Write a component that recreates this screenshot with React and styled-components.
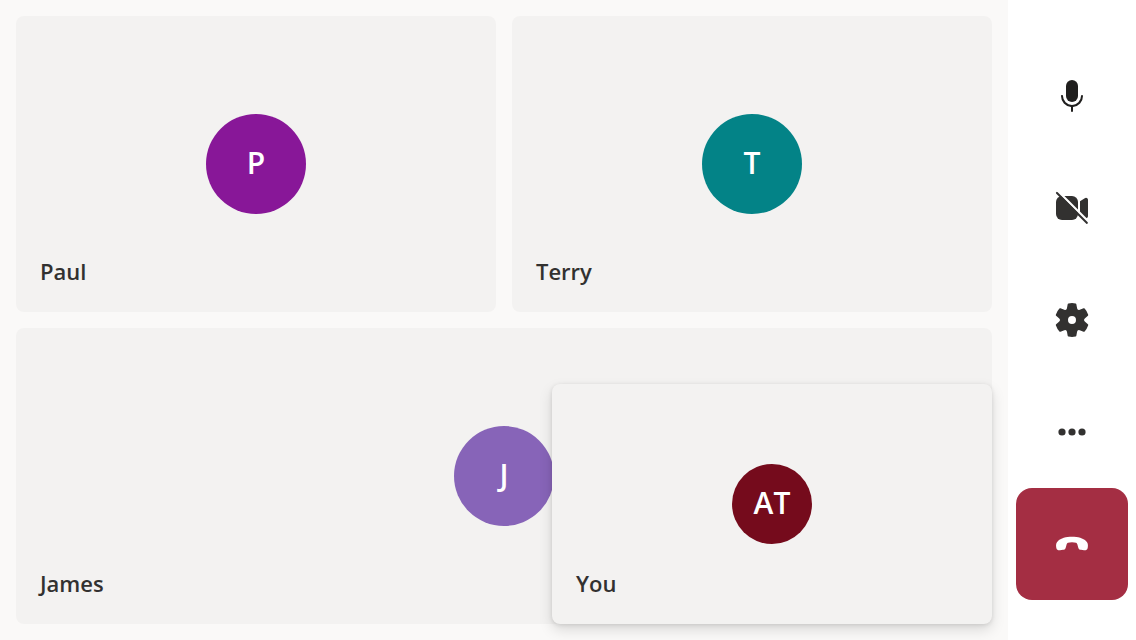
import React from "react";
import styled, { createGlobalStyle } from "styled-components";

const GlobalStyle = createGlobalStyle`
  *, *::before, *::after { box-sizing: border-box; }
  body {
    margin: 0;
    background: #faf9f8;
    color: #323130;
    font-family: "Segoe UI", "Open Sans", "Noto Sans", sans-serif;
  }
`;

const Call = styled.div`
  display: flex;
  min-height: 100vh;
`;

const Stage = styled.main`
  position: relative;
  flex: 1;
  min-width: 0;
  display: grid;
  grid-template-columns: repeat(2, 1fr);
  grid-auto-rows: 1fr;
  gap: 16px;
  padding: 16px;
`;

const Tile = styled.section`
  display: grid;
  grid-template: 1fr / 1fr;
  padding: 24px;
  border-radius: 8px;
  background: #f3f2f1;
  grid-column: ${(p) => (p.$wide ? "1 / -1" : "auto")};
`;

const SelfTile = styled(Tile)`
  position: absolute;
  right: 16px;
  bottom: 16px;
  width: 440px;
  height: 240px;
  box-shadow: 0 6px 14px rgba(0, 0, 0, 0.13), 0 1px 4px rgba(0, 0, 0, 0.11);
`;

const Avatar = styled.div`
  grid-area: 1 / 1;
  place-self: center;
  display: flex;
  align-items: center;
  justify-content: center;
  width: ${(p) => p.$size}px;
  height: ${(p) => p.$size}px;
  padding-bottom: 2px;
  border-radius: 50%;
  background: ${(p) => p.$color};
  color: #fff;
  font-size: 30px;
  line-height: 40px;
  font-weight: 600;
`;

const Name = styled.span`
  grid-area: 1 / 1;
  place-self: end start;
  font-size: 22px;
  line-height: 34px;
  font-weight: 600;
`;

const Controls = styled.nav`
  display: flex;
  flex-direction: column;
  justify-content: center;
  padding: 8px;
  background: #fff;
`;

const ControlButton = styled.button`
  display: flex;
  align-items: center;
  justify-content: center;
  width: 112px;
  height: 112px;
  padding: 0;
  border: 0;
  border-radius: 16px;
  background: ${(p) => (p.$danger ? "#a42e43" : "transparent")};
  color: ${(p) => (p.$danger ? "#fff" : p.$strong ? "#201f1e" : "#323130")};
  cursor: pointer;
`;

const Icon = styled.svg.attrs({ viewBox: "0 0 20 20", "aria-hidden": true })`
  width: 40px;
  height: 40px;
  fill: currentColor;
`;

const MicIcon = () => (
  <Icon>
    <path d="M10 13a3 3 0 0 0 3-3V5a3 3 0 1 0-6 0v5a3 3 0 0 0 3 3Z" />
    <path d="M5 9.5c.28 0 .5.22.5.5a4.5 4.5 0 1 0 9 0 .5.5 0 0 1 1 0 5.5 5.5 0 0 1-5 5.48v2.02a.5.5 0 0 1-1 0v-2.02A5.5 5.5 0 0 1 4.5 10c0-.28.22-.5.5-.5Z" />
  </Icon>
);

const VideoOffIcon = () => (
  <Icon>
    <mask id="slash-gap" maskUnits="userSpaceOnUse" x="0" y="0" width="20" height="20">
      <rect width="20" height="20" fill="#fff" />
      <path d="M3.2 1.8 19.2 17.8" stroke="#000" strokeWidth="1.1" />
    </mask>
    <g mask="url(#slash-gap)">
      <rect x="2" y="4" width="11" height="12" rx="3" />
      <path d="M14 6.6v6.8l2.400 1.500a1 1 0 0 0 1.600-.8V5.900a1 1 0 0 0-1.600-.8L14 6.600Z" />
    </g>
    <path d="M2.85 2.15a.5.5 0 1 0-.7.7l15 15a.5.5 0 0 0 .7-.7l-15-15Z" />
  </Icon>
);

const SettingsIcon = () => (
  <Icon>
    <path d="M1.91 7.38A8.5 8.5 0 0 1 3.7 4.3a.5.5 0 0 1 .54-.13l1.92.68a1 1 0 0 0 1.32-.76l.36-2a.5.5 0 0 1 .4-.4 8.53 8.53 0 0 1 3.55 0c.2.04.35.2.38.4l.37 2a1 1 0 0 0 1.32.76l1.92-.68a.5.5 0 0 1 .54.13 8.5 8.5 0 0 1 1.78 3.08c.06.2 0 .4-.15.54l-1.56 1.32a1 1 0 0 0 0 1.52l1.56 1.32a.5.5 0 0 1 .15.54 8.5 8.5 0 0 1-1.78 3.08.5.5 0 0 1-.54.13l-1.92-.68a1 1 0 0 0-1.32.76l-.37 2a.5.5 0 0 1-.38.4 8.53 8.53 0 0 1-3.56 0 .5.5 0 0 1-.39-.4l-.36-2a1 1 0 0 0-1.32-.76l-1.92.68a.5.5 0 0 1-.54-.13 8.5 8.5 0 0 1-1.78-3.08.5.5 0 0 1 .15-.54l1.56-1.32a1 1 0 0 0 0-1.52L2.06 7.92a.5.5 0 0 1-.15-.54ZM8 10a2 2 0 1 0 4 0 2 2 0 0 0-4 0Z" />
  </Icon>
);

const MoreIcon = () => (
  <Icon>
    <circle cx="5" cy="10" r="1.8" />
    <circle cx="10" cy="10" r="1.8" />
    <circle cx="15" cy="10" r="1.8" />
  </Icon>
);

const HangUpIcon = () => (
  <Icon>
    <path d="M10 6.4c3 0 5.600.7 7.100 2.200.8.8 1 1.700.8 3l-.1.5c-.2.8-.9 1.100-1.800 1l-1.500-.2c-.8-.1-1.200-.5-1.400-1.200l-.4-1.400c-.1-.5-.3-.7-.7-.9-.5-.2-1.200-.3-2-.3s-1.500.1-2 .3c-.4.2-.6.4-.7.9l-.4 1.400c-.2.7-.6 1.100-1.400 1.200l-1.500.2c-.9.1-1.600-.2-1.800-1l-.1-.5c-.2-1.300 0-2.200.8-3C4.400 7.100 7 6.400 10 6.400Z" />
  </Icon>
);

const participants = [
  { name: "Paul", initials: "P", color: "#881798" },
  { name: "Terry", initials: "T", color: "#038387" },
  { name: "James", initials: "J", color: "#8764b8", wide: true },
];

export default function App() {
  return (
    <>
      <GlobalStyle />
      <Call>
        <Stage>
          {participants.map((p) => (
            <Tile key={p.name} $wide={p.wide}>
              <Avatar $size={100} $color={p.color}>{p.initials}</Avatar>
              <Name>{p.name}</Name>
            </Tile>
          ))}
          <SelfTile>
            <Avatar $size={80} $color="#750b1c">AT</Avatar>
            <Name>You</Name>
          </SelfTile>
        </Stage>
        <Controls aria-label="Call controls">
          <ControlButton type="button" aria-label="Mute" $strong><MicIcon /></ControlButton>
          <ControlButton type="button" aria-label="Turn camera on"><VideoOffIcon /></ControlButton>
          <ControlButton type="button" aria-label="Settings"><SettingsIcon /></ControlButton>
          <ControlButton type="button" aria-label="More options"><MoreIcon /></ControlButton>
          <ControlButton type="button" aria-label="Leave call" $danger><HangUpIcon /></ControlButton>
        </Controls>
      </Call>
    </>
  );
}
